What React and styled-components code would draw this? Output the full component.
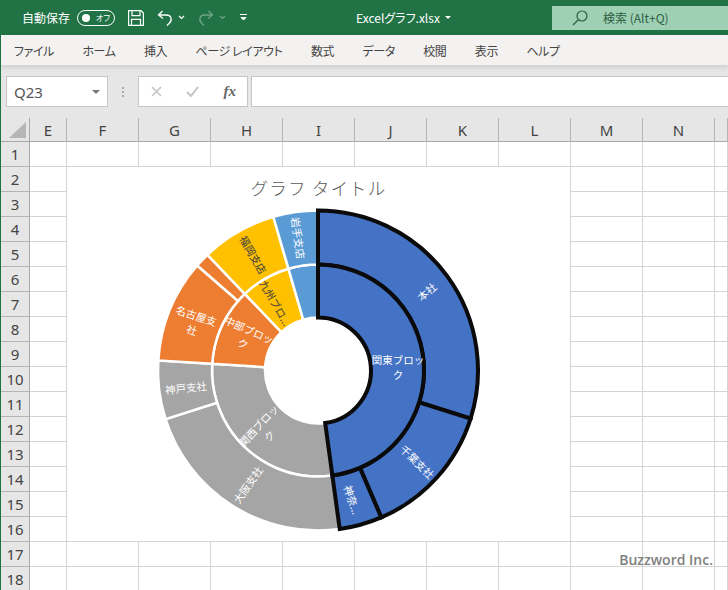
import React from 'react';
import styled, { createGlobalStyle } from 'styled-components';

const JP = '"Noto Sans CJK JP", "Noto Sans", sans-serif';

const GlobalStyle = createGlobalStyle`
  html, body { margin: 0; padding: 0; background: #fff; }
  * { box-sizing: border-box; }
`;

const Page = styled.div`
  width: 728px;
  height: 590px;
  overflow: hidden;
  display: flex;
  flex-direction: column;
  font-family: ${JP};
`;

const TitleBar = styled.div`
  height: 35px;
  flex: none;
  background: #217346;
  color: #fff;
  display: flex;
  align-items: center;
  padding-left: 22px;
  font-size: 12px;
  font-feature-settings: "palt";
`;

const AutoSave = styled.span`
  width: 55px;
  white-space: nowrap;
`;

const Toggle = styled.div`
  width: 38px;
  height: 16px;
  border: 1px solid #fff;
  border-radius: 8px;
  display: flex;
  align-items: center;
  justify-content: space-between;
  padding: 0 4px;
  font-size: 8px;
  margin-right: 13px;
  &::before {
    content: "";
    width: 8px;
    height: 8px;
    border-radius: 50%;
    background: #fff;
  }
`;

const QuickIcon = styled.svg`
  flex: none;
  margin-right: ${p => p.$gap || 0}px;
  opacity: ${p => (p.$dim ? 0.35 : 1)};
`;

const FileName = styled.div`
  margin-left: 109px;
  width: 82px;
  white-space: nowrap;
  font-size: 12px;
`;

const Caret = styled.span`
  margin-left: 7px;
  width: 0;
  height: 0;
  border-left: 3px solid transparent;
  border-right: 3px solid transparent;
  border-top: 3px solid #fff;
`;

const SearchBox = styled.div`
  margin-left: auto;
  width: 176px;
  height: 24px;
  background: #9fd0b3;
  color: #2c5e44;
  display: flex;
  align-items: center;
  padding-left: 20px;
  gap: 15px;
  font-size: 12px;
`;

const Body = styled.div`
  flex: 1;
  min-height: 0;
  display: flex;
  flex-direction: column;
  border-left: 1px solid #217346;
`;

const Tabs = styled.nav`
  height: 30px;
  flex: none;
  background: #f3f2f1;
  display: flex;
  align-items: center;
  padding-left: 13px;
  gap: 28.4px;
  font-size: 12px;
  letter-spacing: -0.4px;
  color: #444;
  font-feature-settings: "palt";
  position: relative;
  z-index: 1;
  box-shadow: 0 2px 5px rgba(0, 0, 0, 0.12);
`;

const FormulaBar = styled.div`
  height: 53px;
  flex: none;
  background: #e6e6e6;
  display: flex;
  align-items: flex-start;
  padding: 11px 0 0 5px;
`;

const NameBox = styled.div`
  width: 102px;
  height: 31px;
  background: #fff;
  border: 1px solid #c6c6c6;
  display: flex;
  align-items: center;
  justify-content: space-between;
  padding: 0 7px;
  font-family: "Noto Sans", sans-serif;
  font-size: 15px;
  color: #555;
  &::after {
    content: "";
    border-left: 4px solid transparent;
    border-right: 4px solid transparent;
    border-top: 4px solid #777;
  }
`;

const Grip = styled.div`
  width: 30px;
  height: 31px;
  display: flex;
  flex-direction: column;
  align-items: center;
  justify-content: center;
  gap: 2px;
  i {
    width: 2px;
    height: 2px;
    background: #aaa;
  }
`;

const FormulaButtons = styled.div`
  width: 110px;
  height: 31px;
  background: #fff;
  border: 1px solid #c6c6c6;
  display: flex;
  align-items: center;
  justify-content: space-between;
  padding: 0 11px 0 12px;
  margin-right: 3px;
`;

const FxMark = styled.span`
  font-family: "Liberation Serif", serif;
  font-style: italic;
  font-weight: 700;
  font-size: 15px;
  color: #666;
`;

const FormulaInput = styled.div`
  flex: 1;
  height: 31px;
  background: #fff;
  border: 1px solid #c6c6c6;
  border-right: none;
`;

const Sheet = styled.div`
  position: relative;
  flex: 1;
  min-height: 0;
  overflow: hidden;
  display: grid;
  grid-template-columns: 29px 37px repeat(9, 72px) 1fr;
  grid-auto-rows: 25px;
  grid-template-rows: 24px;
  background: #fff;
`;

const Corner = styled.div`
  background: #e6e6e6;
  border-right: 1px solid #a8a8a8;
  border-bottom: 1px solid #a8a8a8;
  position: relative;
  &::after {
    content: "";
    position: absolute;
    left: 8px;
    top: 4px;
    border-style: solid;
    border-width: 0 0 16px 17px;
    border-color: transparent transparent #b6b6b6 transparent;
  }
`;

const ColHead = styled.div`
  background: #e6e6e6;
  border-bottom: 1px solid #a8a8a8;
  border-right: 1px solid #b4b4b4;
  display: flex;
  align-items: center;
  justify-content: center;
  font-family: "Noto Sans", sans-serif;
  font-size: 15px;
  color: #444;
`;

const RowHead = styled.div`
  background: #e6e6e6;
  border-right: 1px solid #a8a8a8;
  border-bottom: 1px solid #b4b4b4;
  display: flex;
  align-items: center;
  justify-content: center;
  font-family: "Noto Sans", sans-serif;
  font-size: 15px;
  line-height: 24px;
  overflow: hidden;
  color: #444;
`;

const Cell = styled.div`
  border-right: 1px solid #d4d4d4;
  border-bottom: 1px solid #d4d4d4;
`;

const Chart = styled.div`
  position: absolute;
  left: 66px;
  top: 49px;
  width: 503px;
  height: 374px;
  background: #fff;
`;

const ChartTitle = styled.div`
  text-align: center;
  padding-top: 8px;
  font-size: 17.5px;
  font-weight: 300;
  line-height: 26px;
  letter-spacing: 1.2px;
  color: #595959;
`;

const ChartSvg = styled.svg`
  position: absolute;
  left: 0;
  top: 0;
`;

const Watermark = styled.div`
  position: absolute;
  right: 15px;
  bottom: 21px;
  font-family: "Open Sans", sans-serif;
  font-weight: 600;
  font-size: 14px;
  color: #7f7f7f;
`;

const CX = 318;
const CY = 370.5;
const R1 = 53;
const R2 = 106;
const R3 = 160;

function pt(r, deg) {
  const a = (deg * Math.PI) / 180;
  return [CX + r * Math.sin(a), CY - r * Math.cos(a)];
}

function wedge(r0, r1, a0, a1) {
  const [x0, y0] = pt(r1, a0);
  const [x1, y1] = pt(r1, a1);
  const [x2, y2] = pt(r0, a1);
  const [x3, y3] = pt(r0, a0);
  const large = a1 - a0 > 180 ? 1 : 0;
  return `M${x0} ${y0}A${r1} ${r1} 0 ${large} 1 ${x1} ${y1}L${x2} ${y2}A${r0} ${r0} 0 ${large} 0 ${x3} ${y3}Z`;
}

const BLUE = '#4472c4';
const SKY = '#5b9bd5';
const ORANGE = '#ed7d31';
const GREY = '#a5a5a5';
const YELLOW = '#ffc000';

const plain = [
  [R1, R2, 172.2, 273.6, GREY],
  [R1, R2, 273.6, 316.3, ORANGE],
  [R1, R2, 316.3, 343.8, YELLOW],
  [R1, R2, 343.8, 360, SKY],
  [R2, R3, 172.2, 252.3, GREY],
  [R2, R3, 252.3, 273.6, GREY],
  [R2, R3, 273.6, 311, ORANGE],
  [R2, R3, 311, 316.3, ORANGE],
  [R2, R3, 316.3, 343.8, YELLOW],
  [R2, R3, 343.8, 360, SKY],
];

const selected = [
  [R2, R3, 0, 107.5],
  [R2, R3, 107.5, 156.7],
  [R2, R3, 156.7, 172.2],
  [R1, R2, 0, 172.2],
];

const labels = [
  { x: 427, y: 292, r: -40, t: ['本社'] },
  { x: 398, y: 367, r: 0, t: ['関東ブロッ', 'ク'] },
  { x: 417, y: 462, r: 44, t: ['千葉支社'] },
  { x: 352, y: 500, r: 72, t: ['神奈...'] },
  { x: 248, y: 485, r: -55, t: ['大阪支社'] },
  { x: 186, y: 388, r: -6, t: ['神戸支社'] },
  { x: 264, y: 431, r: -47, t: ['関西ブロッ', 'ク'] },
  { x: 194, y: 323, r: 18, t: ['名古屋支', '社'] },
  { x: 246, y: 337, r: 24, t: ['中部ブロッ', 'ク'] },
  { x: 253, y: 255, r: 60, t: ['福岡支店'], dark: true },
  { x: 275, y: 303, r: 60, t: ['九州ブロ...'], dark: true },
  { x: 298, y: 238, r: 82, t: ['岩手支店'] },
];

const LabelText = styled.text`
  font-family: ${JP};
  font-size: 10.5px;
  text-anchor: middle;
  fill: ${p => (p.$dark ? '#404040' : '#fff')};
`;

const columns = ['E', 'F', 'G', 'H', 'I', 'J', 'K', 'L', 'M', 'N', ''];
const rows = Array.from({ length: 18 }, (_, i) => i + 1);
const tabs = ['ファイル', 'ホーム', '挿入', 'ページ レイアウト', '数式', 'データ', '校閲', '表示', 'ヘルプ'];

function SunburstChart() {
  return (
    <Chart>
      <ChartTitle>グラフ タイトル</ChartTitle>
      <ChartSvg width="503" height="374" viewBox="67 167 503 374">
        {plain.map(([r0, r1, a0, a1, fill], i) => (
          <path key={i} d={wedge(r0, r1, a0, a1)} fill={fill} stroke="#fff" strokeWidth="2.5" />
        ))}
        {selected.map(([r0, r1, a0, a1], i) => (
          <path key={i} d={wedge(r0, r1, a0, a1)} fill={BLUE} stroke="#0a0a0a" strokeWidth="4" />
        ))}
        {labels.map((l, i) => (
          <g key={i} transform={`translate(${l.x} ${l.y}) rotate(${l.r})`}>
            {l.t.map((line, j) => (
              <LabelText key={j} $dark={l.dark} y={4 + (j - (l.t.length - 1) / 2) * 15}>
                {line}
              </LabelText>
            ))}
          </g>
        ))}
      </ChartSvg>
    </Chart>
  );
}

export default function App() {
  return (
    <Page>
      <GlobalStyle />
      <TitleBar>
        <AutoSave>自動保存</AutoSave>
        <Toggle>オフ</Toggle>
        <QuickIcon width="16" height="16" viewBox="0 0 16 16" fill="none" stroke="#fff" strokeWidth="1.2" $gap={13}>
          <path d="M.6.6h12.400l2.400 2.400v12.400H.6z" />
          <path d="M4 .6v5h8v-5M3.500 15.400v-6h9v6" />
        </QuickIcon>
        <QuickIcon width="16" height="16" viewBox="0 0 16 16" fill="none" stroke="#fff" strokeWidth="1.3" $gap={5}>
          <path d="M5.500 1L1.500 5l4.500 3.500M1.500 5H9c5.500 0 6.500 5 3.500 8L10 15.500" />
        </QuickIcon>
        <QuickIcon width="7" height="5" viewBox="0 0 7 5" fill="none" stroke="#fff" strokeWidth="1.2" $gap={13}>
          <path d="M1 1l2.500 2.500L6 1" />
        </QuickIcon>
        <QuickIcon width="16" height="16" viewBox="0 0 16 16" fill="none" stroke="#fff" strokeWidth="1.3" $gap={5} $dim>
          <path d="M10.500 1l4 4-4.500 3.500M14.500 5H7C1.500 5 .5 10 3.500 13L6 15.500" />
        </QuickIcon>
        <QuickIcon width="7" height="5" viewBox="0 0 7 5" fill="none" stroke="#fff" strokeWidth="1.2" $gap={14} $dim>
          <path d="M1 1l2.500 2.500L6 1" />
        </QuickIcon>
        <QuickIcon width="7" height="7" viewBox="0 0 7 7" fill="#fff" stroke="#fff">
          <path d="M0 .5h7" fill="none" />
          <path d="M1 3.500h5L3.500 6z" />
        </QuickIcon>
        <FileName>Excelグラフ.xlsx</FileName>
        <Caret />
        <SearchBox>
          <svg width="16" height="16" viewBox="0 0 16 16" fill="none" stroke="#2c5e44" strokeWidth="1.2">
            <circle cx="10" cy="6" r="5" />
            <path d="M6.500 9.500L1 15" />
          </svg>
          検索 (Alt+Q)
        </SearchBox>
      </TitleBar>
      <Body>
        <Tabs>
          {tabs.map(t => (
            <span key={t}>{t}</span>
          ))}
        </Tabs>
        <FormulaBar>
          <NameBox>Q23</NameBox>
          <Grip>
            <i />
            <i />
            <i />
          </Grip>
          <FormulaButtons>
            <svg width="11" height="11" viewBox="0 0 11 11" stroke="#c4c4c4" strokeWidth="1.6">
              <path d="M1 1l9 9M10 1l-9 9" />
            </svg>
            <svg width="13" height="11" viewBox="0 0 13 11" fill="none" stroke="#c4c4c4" strokeWidth="2">
              <path d="M1 6l4 4 7-9" />
            </svg>
            <FxMark>fx</FxMark>
          </FormulaButtons>
          <FormulaInput />
        </FormulaBar>
        <Sheet>
          <Corner />
          {columns.map((c, i) => (
            <ColHead key={i}>{c}</ColHead>
          ))}
          {rows.map(r => (
            <React.Fragment key={r}>
              <RowHead>{r}</RowHead>
              {columns.map((c, i) => (
                <Cell key={i} />
              ))}
            </React.Fragment>
          ))}
          <SunburstChart />
          <Watermark>Buzzword Inc.</Watermark>
        </Sheet>
      </Body>
    </Page>
  );
}
